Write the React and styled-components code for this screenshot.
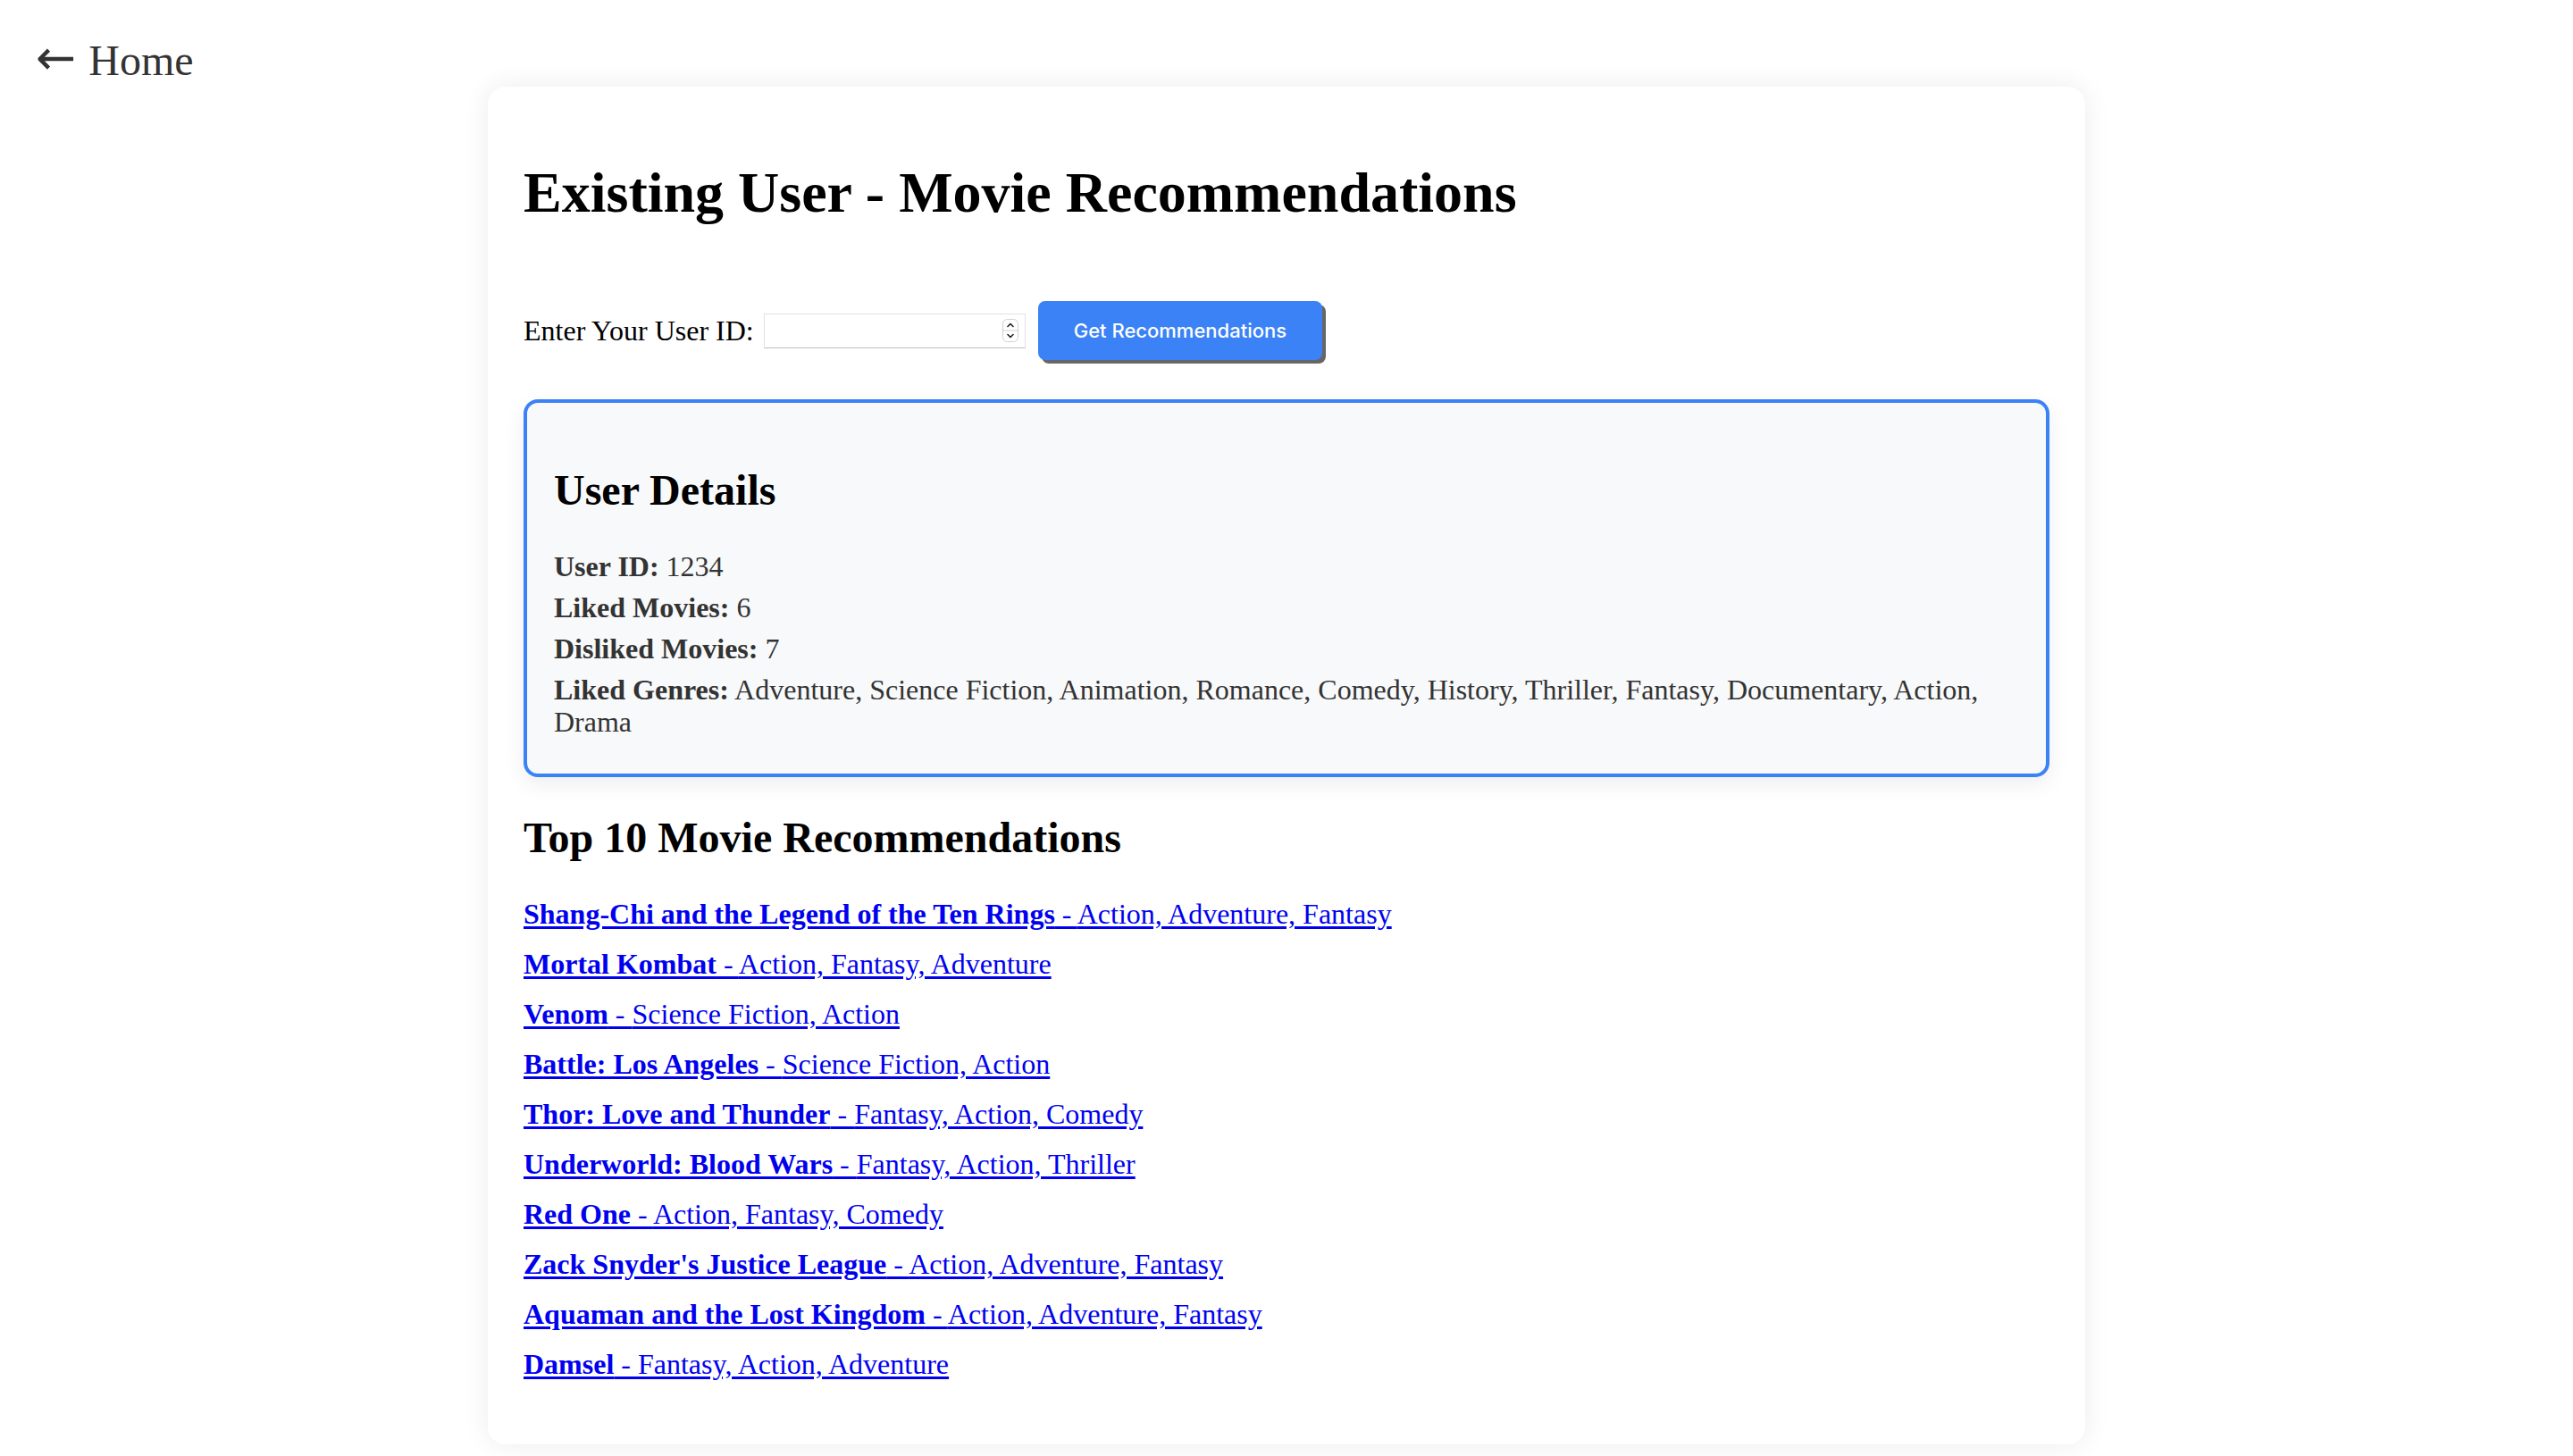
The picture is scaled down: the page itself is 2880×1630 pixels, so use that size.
import React from "react";
import styled, { createGlobalStyle } from "styled-components";

const GlobalStyle = createGlobalStyle`
    html, body {
        margin: 0;
        padding: 0;
        background: #fff;
        overflow: hidden;
    }
    body {
        font-family: "Liberation Serif", "Times New Roman", serif;
        color: #000;
    }
`;

const Page = styled.div`
    padding: 38px 40px 0;
    box-sizing: border-box;
    min-height: 1630px;
`;

const BackLink = styled.a`
    display: inline-flex;
    align-items: baseline;
    height: 55px;
    font-size: 48px;
    line-height: 55px;
    color: #333;
    text-decoration: none;
    cursor: pointer;
`;

const Arrow = styled.span`
    font-family: "DejaVu Sans", sans-serif;
    font-size: 54px;
    margin-right: 14px;
    transform: translateY(-1px);
`;

const Card = styled.div`
    width: 1788px;
    box-sizing: border-box;
    margin: 4px auto 0;
    padding: 40px;
    background: #fff;
    border-radius: 20px;
    box-shadow: 0 0 30px rgba(0, 0, 0, 0.08);
`;

const Title = styled.h1`
    font-size: 64px;
    font-weight: bold;
    margin: 42px 0 0;
`;

const SectionTitle = styled.h2`
    font-size: 48px;
    font-weight: bold;
    margin: 40px 0;
`;

const Form = styled.div`
    display: flex;
    align-items: center;
    margin: 84px 0 44px;
`;

const Label = styled.label`
    font-size: 32px;
    line-height: 36px;
`;

const InputBox = styled.div`
    display: flex;
    align-items: center;
    width: 293px;
    height: 39px;
    box-sizing: border-box;
    margin-left: 11px;
    padding-right: 7px;
    background: #fff;
    border: 1px solid #e2e2e2;
    border-bottom-color: #bdbdbd;
`;

const NumberInput = styled.input`
    flex: 1;
    min-width: 0;
    height: 100%;
    border: none;
    outline: none;
    background: transparent;
    font-size: 26px;
    padding: 0 8px;
    -moz-appearance: textfield;
    &::-webkit-inner-spin-button,
    &::-webkit-outer-spin-button {
        -webkit-appearance: none;
        margin: 0;
    }
`;

const Spinner = styled.svg`
    flex: none;
    width: 18px;
    height: 26px;
`;

const Button = styled.button`
    margin-left: 14px;
    height: 66px;
    padding: 0 40px;
    border: none;
    border-radius: 8px;
    background: #3b82f6;
    color: #fff;
    font-family: "Inter", "Roboto", sans-serif;
    font-size: 22px;
    font-weight: 500;
    box-shadow: 4px 4px 0 #666;
    cursor: pointer;
`;

const DetailsBox = styled.div`
    display: flow-root;
    padding: 30px;
    background: #f8f9fa;
    border: 4px solid #3b82f6;
    border-radius: 16px;
    box-shadow: 0 8px 24px rgba(0, 0, 0, 0.07);
`;

const Detail = styled.p`
    font-size: 32px;
    line-height: 36px;
    margin: 10px 0;
    color: #333;
`;

const MovieList = styled.ul`
    list-style: none;
    padding: 0;
    margin: 32px 0;
`;

const MovieItem = styled.li`
    font-size: 32px;
    line-height: 36px;
    margin: 20px 0;
`;

const MovieLink = styled.a`
    color: #0000ee;
    text-decoration: underline;
    text-underline-offset: 3px;
    cursor: pointer;
`;

const user = {
    id: 1234,
    liked: 6,
    disliked: 7,
    genres: ["Adventure", "Science Fiction", "Animation", "Romance", "Comedy", "History", "Thriller", "Fantasy", "Documentary", "Action", "Drama"],
};

const movies = [
    { title: "Shang-Chi and the Legend of the Ten Rings", genres: "Action, Adventure, Fantasy" },
    { title: "Mortal Kombat", genres: "Action, Fantasy, Adventure" },
    { title: "Venom", genres: "Science Fiction, Action" },
    { title: "Battle: Los Angeles", genres: "Science Fiction, Action" },
    { title: "Thor: Love and Thunder", genres: "Fantasy, Action, Comedy" },
    { title: "Underworld: Blood Wars", genres: "Fantasy, Action, Thriller" },
    { title: "Red One", genres: "Action, Fantasy, Comedy" },
    { title: "Zack Snyder's Justice League", genres: "Action, Adventure, Fantasy" },
    { title: "Aquaman and the Lost Kingdom", genres: "Action, Adventure, Fantasy" },
    { title: "Damsel", genres: "Fantasy, Action, Adventure" },
];

const App = () => {
    return (
        <Page>
            <GlobalStyle />
            <BackLink><Arrow>←</Arrow>Home</BackLink>
            <Card>
                <Title>Existing User - Movie Recommendations</Title>
                <Form>
                    <Label htmlFor="userId">Enter Your User ID:</Label>
                    <InputBox>
                        <NumberInput id="userId" type="number" />
                        <Spinner viewBox="0 0 18 26">
                            <rect x="0.5" y="0.5" width="17" height="25" rx="5" fill="#fff" stroke="#d0d0d0" />
                            <line x1="1" y1="13" x2="17" y2="13" stroke="#d0d0d0" />
                            <path d="M6 8.5 L9 5.5 L12 8.5" fill="none" stroke="#222" strokeWidth="1.6" strokeLinecap="round" strokeLinejoin="round" />
                            <path d="M6 17.5 L9 20.5 L12 17.5" fill="none" stroke="#222" strokeWidth="1.6" strokeLinecap="round" strokeLinejoin="round" />
                        </Spinner>
                    </InputBox>
                    <Button>Get Recommendations</Button>
                </Form>
                <DetailsBox>
                    <SectionTitle>User Details</SectionTitle>
                    <Detail><strong>User ID:</strong> {user.id}</Detail>
                    <Detail><strong>Liked Movies:</strong> {user.liked}</Detail>
                    <Detail><strong>Disliked Movies:</strong> {user.disliked}</Detail>
                    <Detail><strong>Liked Genres:</strong> {user.genres.join(", ")}</Detail>
                </DetailsBox>
                <SectionTitle>Top 10 Movie Recommendations</SectionTitle>
                <MovieList>
                    {movies.map((m) => (
                        <MovieItem key={m.title}>
                            <MovieLink><strong>{m.title}</strong> - {m.genres}</MovieLink>
                        </MovieItem>
                    ))}
                </MovieList>
            </Card>
        </Page>
    );
};

export default App;
